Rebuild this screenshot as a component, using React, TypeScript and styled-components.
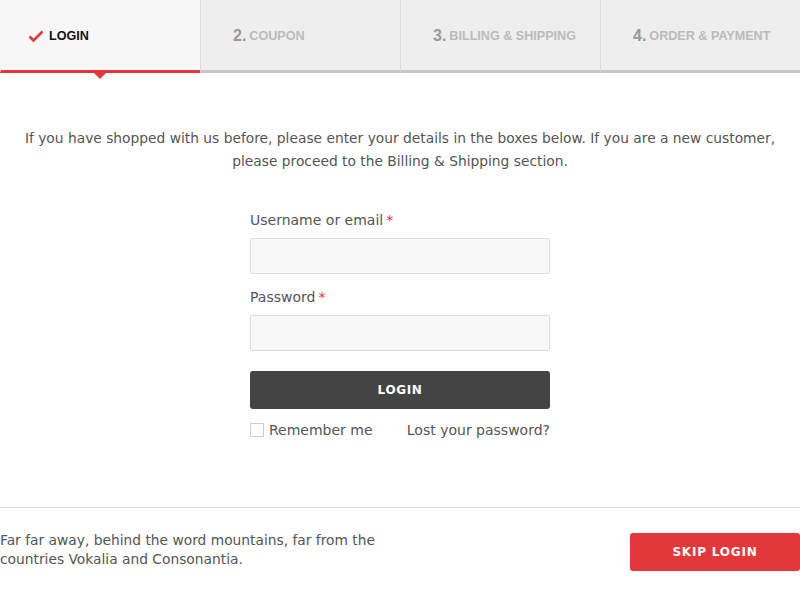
import React from "react";
import styled, { createGlobalStyle } from "styled-components";

const GlobalStyle = createGlobalStyle`
  * { box-sizing: border-box; }
  body {
    margin: 0;
    background: #ffffff;
    font-family: "DejaVu Sans", "Noto Sans", sans-serif;
    color: #555555;
  }
`;

const Page = styled.div`
  width: 800px;
  min-height: 595px;
  display: flex;
  flex-direction: column;
`;

const Tabs = styled.nav`
  display: grid;
  grid-template-columns: repeat(4, 1fr);
  height: 73px;
`;

const Tab = styled.div<{ $active?: boolean }>`
  position: relative;
  display: flex;
  align-items: center;
  gap: 5px;
  padding-left: ${(p) => (p.$active ? "27px" : "32px")};
  padding-top: 1px;
  background: ${(p) => (p.$active ? "#f7f7f7" : "#eeeeee")};
  border-left: 1px solid ${(p) => (p.$active ? "transparent" : "#dddddd")};
  border-bottom: 3px solid ${(p) => (p.$active ? "#e4373a" : "#c8c8c8")};
  font-family: "Liberation Sans", Arial, sans-serif;
  font-size: 12.6px;
  font-weight: 700;
  text-transform: uppercase;
  color: ${(p) => (p.$active ? "#111111" : "#bbbbbb")};

  ${(p) =>
    p.$active &&
    `
    &::after {
      content: "";
      position: absolute;
      left: 93px;
      bottom: -9px;
      border-left: 6px solid transparent;
      border-right: 6px solid transparent;
      border-top: 6px solid #e4373a;
    }
  `}
`;

const StepNum = styled.span`
  font-size: 16px;
  font-weight: 700;
  color: #999999;
  margin-right: -2px;
`;

const Intro = styled.p`
  margin: 54px 20px 0;
  text-align: center;
  font-size: 13.8px;
  line-height: 23px;
  color: #555555;
`;

const Form = styled.form`
  width: 300px;
  margin: 37px auto 0;
  display: flex;
  flex-direction: column;
`;

const Label = styled.label`
  font-size: 14px;
  color: #555555;
  margin-bottom: 8px;
  line-height: 20px;
`;

const Req = styled.span`
  color: #e4373a;
  margin-left: 3px;
`;

const Input = styled.input`
  height: 36px;
  background: #f8f8f8;
  border: 1px solid #dddddd;
  border-radius: 2px;
  margin-bottom: 13px;
  outline: none;
`;

const SubmitButton = styled.button`
  height: 38px;
  margin-top: 7px;
  background: #444444;
  border: none;
  border-radius: 3px;
  color: #ffffff;
  font-family: inherit;
  font-size: 12px;
  font-weight: 700;
  letter-spacing: 0.6px;
`;

const OptionsRow = styled.div`
  display: flex;
  justify-content: space-between;
  align-items: center;
  margin-top: 13px;
  font-size: 14px;
`;

const Remember = styled.label`
  display: flex;
  align-items: center;
  gap: 5px;
`;

const Box = styled.span`
  width: 14px;
  height: 14px;
  border: 1px solid #cccccc;
  background: #ffffff;
`;

const LostLink = styled.a`
  color: #555555;
  text-decoration: none;
`;

const Footer = styled.footer`
  margin-top: 69px;
  border-top: 1px solid #dddddd;
  display: flex;
  justify-content: space-between;
  align-items: flex-start;
  padding-top: 23px;
`;

const FooterText = styled.p`
  margin: 0;
  width: 390px;
  font-size: 13.8px;
  line-height: 19px;
  color: #555555;
`;

const SkipButton = styled.button`
  width: 170px;
  height: 38px;
  margin-top: 2px;
  background: #e4373a;
  border: none;
  border-radius: 3px;
  color: #ffffff;
  font-family: inherit;
  font-size: 12px;
  font-weight: 700;
  letter-spacing: 0.8px;
`;

const Check = () => (
  <svg width="16" height="12" viewBox="0 0 16 12">
    <path d="M1.5 6.5 L5.5 10.5 L14.5 1.5" stroke="#e4373a" strokeWidth="2.6" fill="none" />
  </svg>
);

export default function App() {
  return (
    <Page>
      <GlobalStyle />
      <Tabs>
        <Tab $active>
          <Check />
          Login
        </Tab>
        <Tab>
          <StepNum>2.</StepNum> Coupon
        </Tab>
        <Tab>
          <StepNum>3.</StepNum> Billing &amp; Shipping
        </Tab>
        <Tab>
          <StepNum>4.</StepNum> Order &amp; Payment
        </Tab>
      </Tabs>
      <Intro>
        If you have shopped with us before, please enter your details in the boxes below. If you are a new customer,
        please proceed to the Billing &amp; Shipping section.
      </Intro>
      <Form onSubmit={(e) => e.preventDefault()}>
        <Label>
          Username or email<Req>*</Req>
        </Label>
        <Input type="text" />
        <Label>
          Password<Req>*</Req>
        </Label>
        <Input type="password" />
        <SubmitButton type="submit">LOGIN</SubmitButton>
        <OptionsRow>
          <Remember>
            <Box />
            Remember me
          </Remember>
          <LostLink href="#">Lost your password?</LostLink>
        </OptionsRow>
      </Form>
      <Footer>
        <FooterText>
          Far far away, behind the word mountains, far from the countries Vokalia and Consonantia.
        </FooterText>
        <SkipButton>SKIP LOGIN</SkipButton>
      </Footer>
    </Page>
  );
}
